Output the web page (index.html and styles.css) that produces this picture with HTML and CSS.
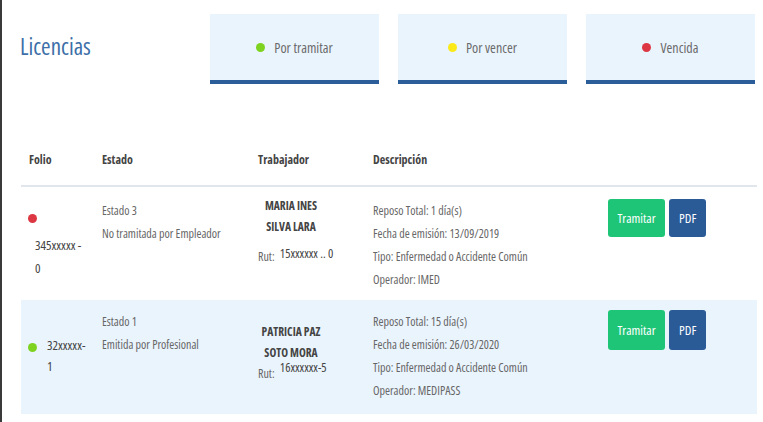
FILE: index.html
```html
<!DOCTYPE html>
<html lang="es">
<head>
    <meta charset="UTF-8">
    <meta name="viewport" content="width=device-width, initial-scale=1.0">
    <title>Licencias</title>
    <link rel="stylesheet" href="styles.css">
</head>
<body>
    <div class="page">
        <header class="top">
            <h1 class="title">Licencias</h1>
            <div class="tabs">
                <div class="tab"><span class="dot green"></span>Por tramitar</div>
                <div class="tab"><span class="dot yellow"></span>Por vencer</div>
                <div class="tab"><span class="dot red"></span>Vencida</div>
            </div>
        </header>

        <table class="list">
            <thead>
                <tr>
                    <th class="col-folio">Folio</th>
                    <th class="col-estado">Estado</th>
                    <th class="col-trab">Trabajador</th>
                    <th class="col-desc">Descripción</th>
                    <th></th>
                </tr>
            </thead>
            <tbody>
                <tr>
                    <td class="folio">
                        <span class="dot red"></span>
                        <div class="folio-num stacked">345xxxxx -<br>0</div>
                    </td>
                    <td class="estado">Estado 3<br>No tramitada por Empleador</td>
                    <td class="worker">
                        <div class="name"><span>MARIA INES</span><span>SILVA LARA</span></div>
                        <div class="rut">Rut: <b>15xxxxxx .. 0</b></div>
                    </td>
                    <td class="desc">
                        Reposo Total: 1 día(s)<br>
                        Fecha de emisión: 13/09/2019<br>
                        Tipo: Enfermedad o Accidente Común<br>
                        Operador: IMED
                    </td>
                    <td class="actions">
                        <button class="btn btn-green">Tramitar</button>
                        <button class="btn btn-blue">PDF</button>
                    </td>
                </tr>
                <tr class="alt">
                    <td class="folio">
                        <div class="folio-inline">
                            <span class="dot green"></span>
                            <div class="folio-num">32xxxxx-<br>1</div>
                        </div>
                    </td>
                    <td class="estado">Estado 1<br>Emitida por Profesional</td>
                    <td class="worker">
                        <div class="name"><span>PATRICIA PAZ</span><span>SOTO MORA</span></div>
                        <div class="rut">Rut: <b>16xxxxxx-5</b></div>
                    </td>
                    <td class="desc">
                        Reposo Total: 15 día(s)<br>
                        Fecha de emisión: 26/03/2020<br>
                        Tipo: Enfermedad o Accidente Común<br>
                        Operador: MEDIPASS
                    </td>
                    <td class="actions">
                        <button class="btn btn-green">Tramitar</button>
                        <button class="btn btn-blue">PDF</button>
                    </td>
                </tr>
            </tbody>
        </table>
    </div>
</body>
</html>
```

FILE: styles.css
```css
* {
    margin: 0;
    padding: 0;
    box-sizing: border-box;
}
body {
    font-family: "Open Sans", "DejaVu Sans", sans-serif;
    font-stretch: 75%;
    color: #666;
    background: #fff;
    height: 100vh;
    overflow: hidden;
}
.page {
    border-left: 2px solid #3a3a3a;
    height: 100%;
    padding-left: 18px;
}
.top {
    display: flex;
    align-items: flex-start;
    padding-top: 14px;
}
.title {
    width: 190px;
    margin-top: 18px;
    font-size: 23px;
    font-weight: normal;
    color: #3d6fa8;
    line-height: 28px;
}
.tabs {
    display: flex;
    gap: 19px;
}
.tab {
    width: 169px;
    height: 70px;
    background: #eaf4fd;
    border-bottom: 4px solid #2b5d99;
    display: flex;
    align-items: center;
    justify-content: center;
    font-size: 14px;
    color: #6b6b6b;
}
.tab .dot {
    margin-right: 9px;
}
.dot {
    display: inline-block;
    width: 9px;
    height: 9px;
    border-radius: 50%;
}
.dot.green { background: #7ed321; }
.dot.yellow { background: #fbe91a; }
.dot.red { background: #dc3742; }

.list {
    margin: 55px 0 0 1px;
    width: 736px;
    border-collapse: collapse;
    font-size: 12px;
}
.list th {
    text-align: left;
    font-size: 12px;
    font-weight: bold;
    color: #444;
    padding: 13px 8px 17px;
    line-height: 16px;
    border-bottom: 2px solid #e1e6ec;
}
.col-folio { width: 73px; }
.col-estado { width: 156px; }
.col-trab { width: 115px; }
.col-desc { width: 235px; }

.list td {
    vertical-align: top;
    height: 114px;
    padding: 12px 8px 0;
    line-height: 23px;
}
.list tr.alt td {
    background: #eaf4fd;
    padding-top: 10px;
}
.list td.folio {
    padding: 27px 0 0 7px;
    font-size: 13px;
    color: #444;
}
.folio > .dot {
    display: block;
}
.folio .folio-num.stacked {
    padding-left: 7px;
    margin-top: 11px;
}
.list tr.alt td.folio {
    padding-top: 35px;
}
.folio-inline {
    display: flex;
    align-items: flex-start;
    gap: 10px;
    line-height: 21px;
}
.folio-inline .dot {
    margin-top: 8px;
}
.worker .name {
    width: 66px;
    display: flex;
    flex-direction: column;
    align-items: center;
    white-space: nowrap;
    font-size: 11.5px;
    font-weight: bold;
    color: #444;
    line-height: 21px;
}
.worker .rut {
    margin-top: 10px;
    line-height: 20px;
    white-space: nowrap;
}
.worker .rut b {
    font-weight: normal;
    font-size: 12.5px;
    color: #444;
    margin-left: 3px;
    position: relative;
    top: -3px;
}
.list td.worker {
    padding-top: 8px;
}
.list tr.alt td.worker {
    padding-top: 21px;
}
.list tr.alt .rut {
    margin-top: 1px;
}
.list tr.alt .rut b {
    top: -6px;
}
.list td.actions {
    padding-left: 8px;
}
.btn {
    height: 38px;
    border: none;
    border-radius: 3px;
    color: #fff;
    font-family: inherit;
    font-stretch: inherit;
    font-size: 13px;
    cursor: pointer;
}
.btn-green {
    width: 57px;
    background: #1fc577;
}
.btn-blue {
    width: 37px;
    margin-left: 2px;
    background: #2a5b97;
}
.list tr.alt .btn {
    height: 40px;
}
```
